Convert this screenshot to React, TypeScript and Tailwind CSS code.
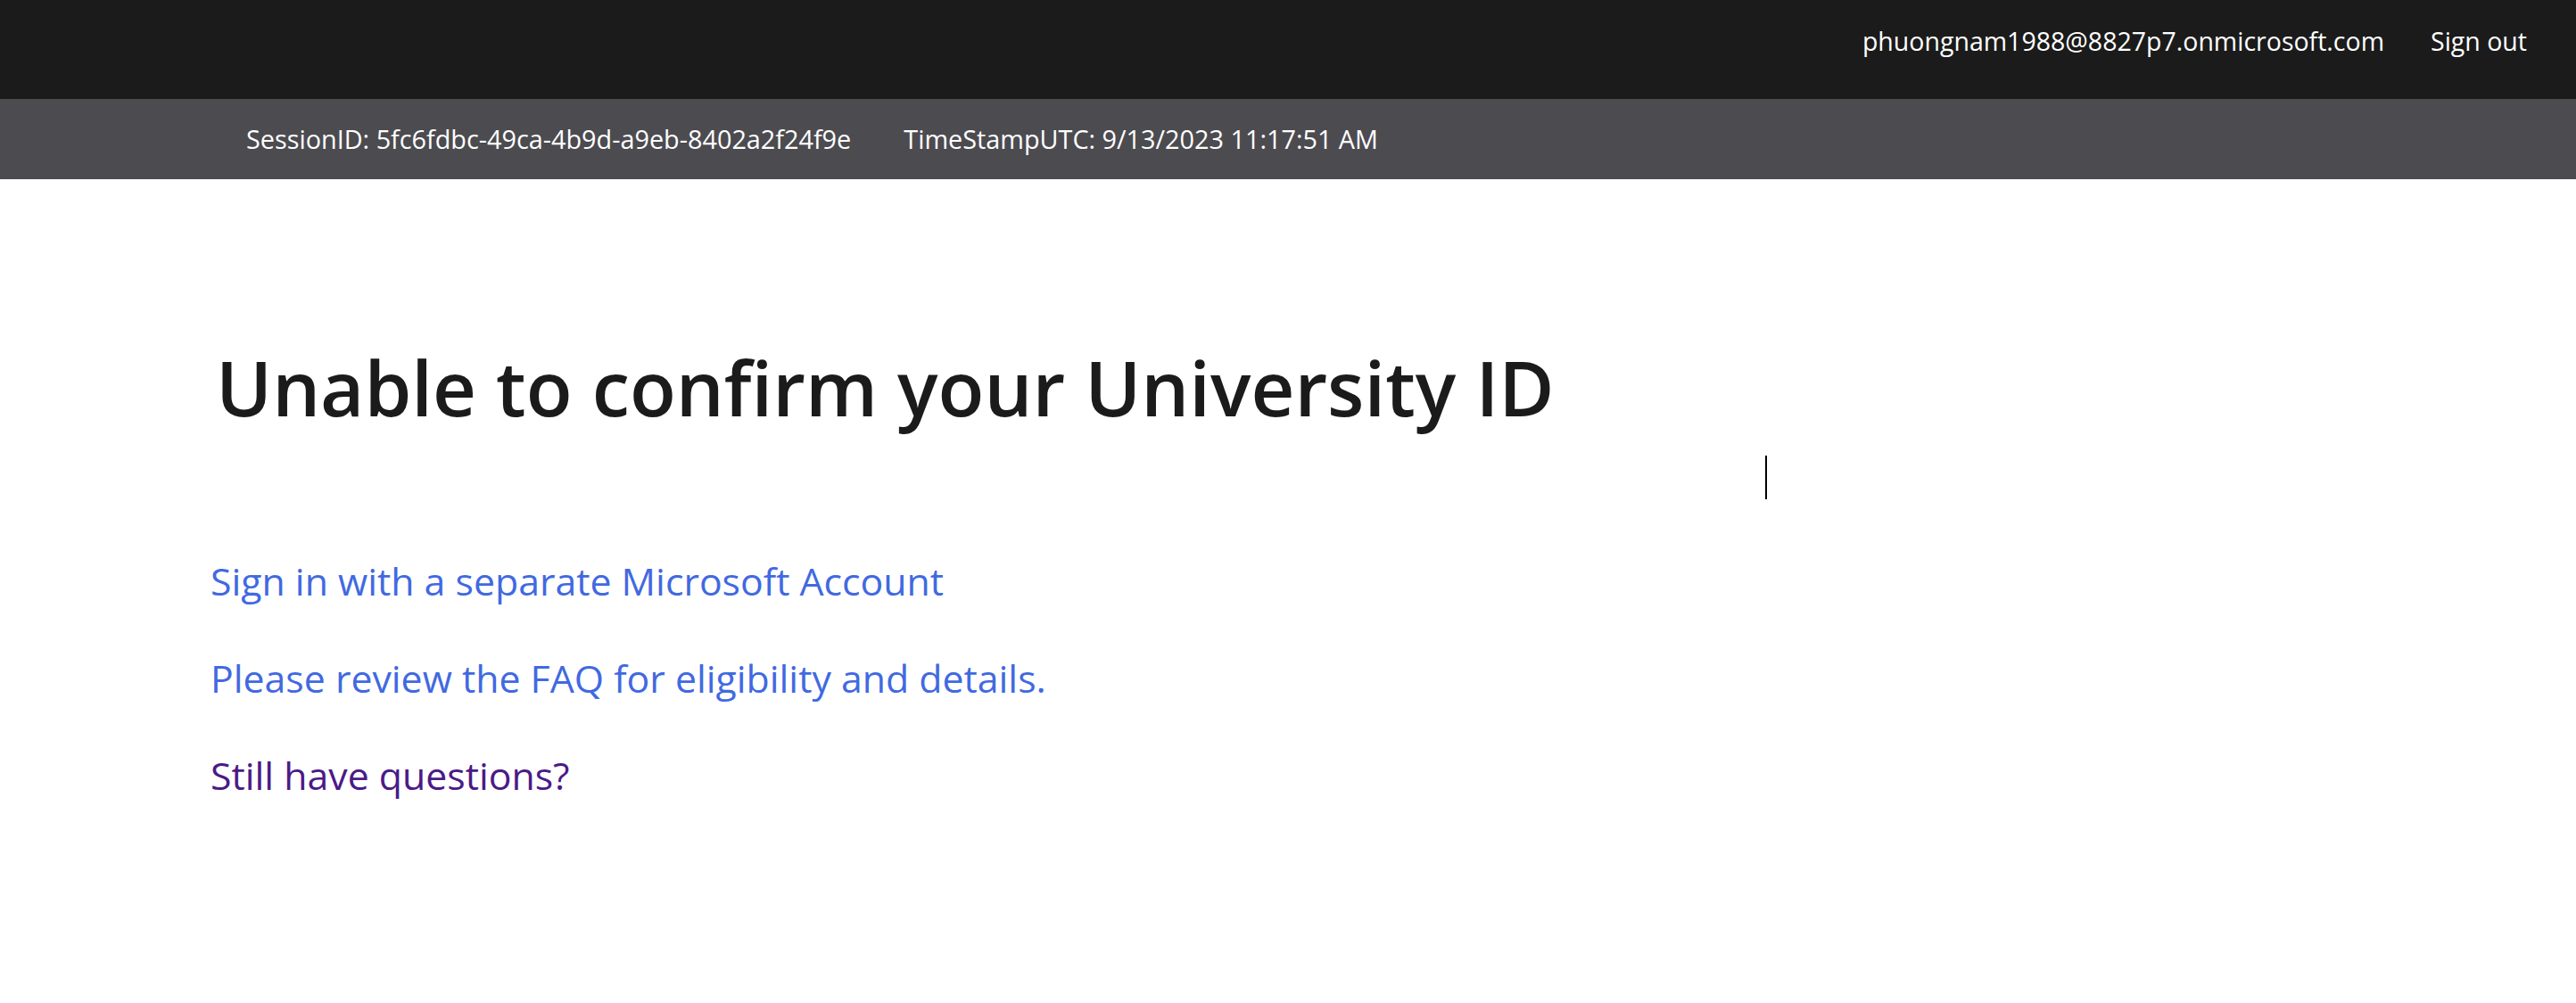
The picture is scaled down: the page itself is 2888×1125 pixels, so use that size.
import React from "react";

export default function App() {
  const font = { fontFamily: '"Segoe UI", "Open Sans", "Noto Sans", sans-serif' };

  return (
    <div className="relative w-full min-h-[1125px] bg-white" style={font}>
      <div className="h-[111px] bg-[#1b1b1b] flex justify-end items-start pt-[27px] pr-[55px] gap-[52px] text-white text-[28.5px] leading-[38px]">
        <span>phuongnam1988@8827p7.onmicrosoft.com</span>
        <a href="#" className="text-white">Sign out</a>
      </div>

      <div className="h-[90px] bg-[#4c4b50] flex items-center pl-[276px] gap-[59px] text-white text-[28.8px]">
        <span>SessionID: 5fc6fdbc-49ca-4b9d-a9eb-8402a2f24f9e</span>
        <span>TimeStampUTC: 9/13/2023 11:17:51 AM</span>
      </div>

      <div className="pl-[236px] pt-[181px]">
        <h1 className="text-[85px] font-semibold leading-[104px] text-[#1b1b1b] pl-[6px]">
          Unable to confirm your University ID
        </h1>

        <div className="mt-[111px] flex flex-col text-[42.8px] leading-[109px]">
          <a href="#" className="text-[#4169e1]">Sign in with a separate Microsoft Account</a>
          <a href="#" className="text-[#4169e1]">Please review the FAQ for eligibility and details.</a>
          <a href="#" className="text-[#4b1a87]">Still have questions?</a>
        </div>
      </div>

      {/* text caret left over the page */}
      <div className="absolute left-[1979px] top-[511px] w-[2px] h-[49px] bg-black" />
    </div>
  );
}
